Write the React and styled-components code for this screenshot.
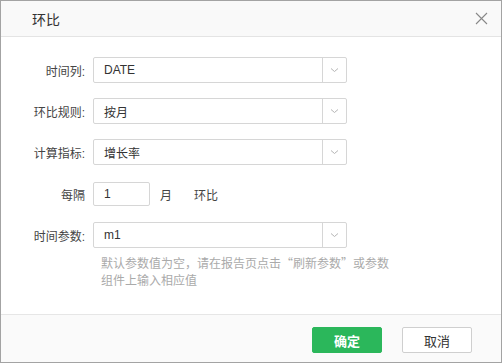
import React from "react";
import styled, { createGlobalStyle } from "styled-components";

const Global = createGlobalStyle`
  html, body {
    margin: 0;
    padding: 0;
    background: #ffffff;
  }
  body {
    font-family: "Liberation Sans", "Noto Sans CJK SC", sans-serif;
    font-size: 12px;
    color: #333;
  }
`;

const Dialog = styled.div`
  width: 502px;
  height: 363px;
  box-sizing: border-box;
  border: 1px solid #a3a3a3;
  display: flex;
  flex-direction: column;
  background: #fff;
`;

const Header = styled.div`
  height: 35px;
  flex-shrink: 0;
  display: flex;
  align-items: center;
  justify-content: space-between;
  padding: 0 12px 0 31px;
  background: #f9f9f9;
  border-bottom: 1px solid #e4e4e4;
`;

const Title = styled.div`
  font-size: 14px;
  color: #333;
`;

const Close = styled.button`
  border: 0;
  background: none;
  padding: 0;
  width: 16px;
  height: 16px;
  display: flex;
  align-items: center;
  justify-content: center;
  cursor: pointer;
`;

const Body = styled.div`
  flex: 1;
  padding: 20px 0 0 20px;
  display: flex;
  flex-direction: column;
`;

const Row = styled.div`
  display: flex;
  align-items: center;
  margin-bottom: ${({ gap }) => gap}px;
`;

const Label = styled.div`
  width: 64px;
  text-align: right;
  margin-right: 8px;
  color: #444;
  font-size: 12px;
  white-space: nowrap;
`;

const Select = styled.div`
  width: 254px;
  height: 26px;
  box-sizing: border-box;
  border: 1px solid #d6d6d6;
  border-radius: 2px;
  display: flex;
  align-items: stretch;
`;

const Value = styled.div`
  flex: 1;
  display: flex;
  align-items: center;
  padding-left: 10px;
  font-size: 12px;
  color: #333;
`;

const Arrow = styled.div`
  width: 23px;
  border-left: 1px solid #d6d6d6;
  display: flex;
  align-items: center;
  justify-content: center;
`;

const NumInput = styled.div`
  width: 57px;
  height: 24px;
  box-sizing: border-box;
  border: 1px solid #d6d6d6;
  border-radius: 2px;
  display: flex;
  align-items: center;
  padding-left: 10px;
  font-size: 12px;
`;

const Unit = styled.span`
  margin-left: ${({ left }) => left}px;
  font-size: 12px;
  color: #444;
`;

const Hint = styled.div`
  margin: 6px 0 0 80px;
  width: 292px;
  font-family: "Noto Sans CJK SC", sans-serif;
  font-size: 12px;
  line-height: 17px;
  color: #aaa;
`;

const Footer = styled.div`
  height: 48px;
  flex-shrink: 0;
  border-top: 1px solid #e6e6e6;
  background: #fafafa;
  display: flex;
  justify-content: flex-end;
  align-items: flex-start;
  padding: 12px 29px 0 0;
  box-sizing: border-box;
  gap: 20px;
`;

const Button = styled.button`
  width: 70px;
  height: 26px;
  border-radius: 2px;
  font-family: inherit;
  font-size: 13px;
  cursor: pointer;
  border: 1px solid ${({ primary }) => (primary ? "#2bb75b" : "#cfcfcf")};
  background: ${({ primary }) => (primary ? "#2bb75b" : "#fff")};
  color: ${({ primary }) => (primary ? "#fff" : "#333")};
  font-weight: ${({ primary }) => (primary ? "bold" : "normal")};
`;

const Chevron = () => (
  <svg width="9" height="6" viewBox="0 0 9 6">
    <path d="M1 1.5 L4.5 4.5 L8 1.5" fill="none" stroke="#b5b5b5" strokeWidth="1" />
  </svg>
);

const Dropdown = ({ value }) => (
  <Select>
    <Value>{value}</Value>
    <Arrow>
      <Chevron />
    </Arrow>
  </Select>
);

const App = () => (
  <>
    <Global />
    <Dialog>
      <Header>
        <Title>环比</Title>
        <Close>
          <svg width="13" height="13" viewBox="0 0 13 13">
            <path d="M1 1 L12 12 M12 1 L1 12" stroke="#888" strokeWidth="1.1" />
          </svg>
        </Close>
      </Header>
      <Body>
        <Row gap={15}>
          <Label>时间列:</Label>
          <Dropdown value="DATE" />
        </Row>
        <Row gap={15}>
          <Label>环比规则:</Label>
          <Dropdown value="按月" />
        </Row>
        <Row gap={17}>
          <Label>计算指标:</Label>
          <Dropdown value="增长率" />
        </Row>
        <Row gap={16}>
          <Label>每隔</Label>
          <NumInput>1</NumInput>
          <Unit left={10}>月</Unit>
          <Unit left={22}>环比</Unit>
        </Row>
        <Row gap={0}>
          <Label>时间参数:</Label>
          <Dropdown value="m1" />
        </Row>
        <Hint>默认参数值为空，请在报告页点击“刷新参数”或参数组件上输入相应值</Hint>
      </Body>
      <Footer>
        <Button primary>确定</Button>
        <Button>取消</Button>
      </Footer>
    </Dialog>
  </>
);

export default App;
